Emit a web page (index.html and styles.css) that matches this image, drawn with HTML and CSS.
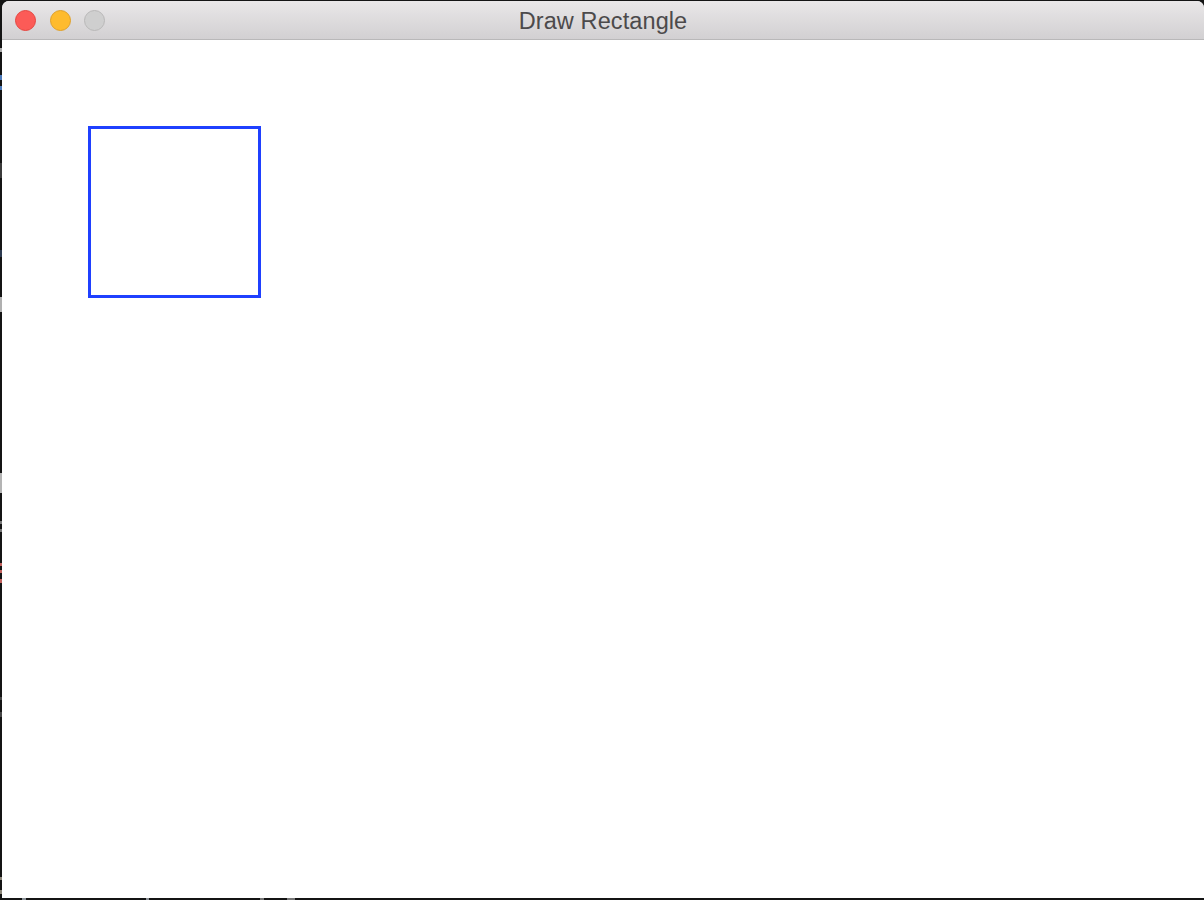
FILE: index.html
```html
<!DOCTYPE html>
<html lang="en">
<head>
    <meta charset="UTF-8">
    <meta name="viewport" content="width=device-width, initial-scale=1.0">
    <title>Draw Rectangle</title>
    <link rel="stylesheet" href="styles.css">
</head>
<body>
    <div class="window">
        <div class="titlebar">
            <div class="lights">
                <span class="light close"></span>
                <span class="light minimize"></span>
                <span class="light zoom"></span>
            </div>
            <div class="title">Draw Rectangle</div>
        </div>
        <div class="canvas">
            <div class="rectangle"></div>
        </div>
    </div>

    <!-- bits of the desktop showing round the window edge -->
    <svg class="edge-specks" width="1204" height="900" viewBox="0 0 1204 900">
        <rect x="0" y="48" width="2" height="4" fill="#a9a9a9"/>
        <rect x="0" y="75" width="2" height="5" fill="#4a78b8"/>
        <rect x="0" y="86" width="2" height="4" fill="#4a78b8"/>
        <rect x="0" y="163" width="2" height="15" fill="#3a3a3a"/>
        <rect x="0" y="250" width="2" height="7" fill="#2c3a50"/>
        <rect x="0" y="297" width="2" height="15" fill="#b0b0b0"/>
        <rect x="0" y="473" width="2" height="20" fill="#b4b4b4"/>
        <rect x="0" y="521" width="2" height="3" fill="#777"/>
        <rect x="0" y="529" width="2" height="3" fill="#777"/>
        <rect x="0" y="563" width="2" height="3" fill="#c0605c"/>
        <rect x="0" y="570" width="2" height="3" fill="#c0605c"/>
        <rect x="0" y="579" width="2" height="4" fill="#c0605c"/>
        <rect x="0" y="697" width="2" height="3" fill="#444"/>
        <rect x="0" y="712" width="2" height="5" fill="#444"/>
        <rect x="0" y="877" width="2" height="3" fill="#8a8578"/>
        <rect x="0" y="890" width="2" height="4" fill="#8a8578"/>
        <rect x="22" y="898" width="4" height="2" fill="#8a9096"/>
        <rect x="146" y="898" width="3" height="2" fill="#8a9096"/>
        <rect x="260" y="898" width="4" height="2" fill="#777"/>
        <rect x="287" y="898" width="8" height="2" fill="#777"/>
    </svg>
</body>
</html>
```

FILE: styles.css
```css
html, body {
    margin: 0;
    height: 100%;
    background: #141414;
}

.window {
    height: 897px;
    margin: 1px 0 2px 2px;
    display: flex;
    flex-direction: column;
    overflow: hidden;
    border-radius: 7px 7px 0 0;
    background: #fff;
}

.titlebar {
    position: relative;
    height: 39px;
    flex-shrink: 0;
    display: flex;
    align-items: center;
    justify-content: center;
    box-sizing: border-box;
    padding-top: 2px;
    background: linear-gradient(#e9e7e8 0%, #d2d0d2 100%);
    border-bottom: 1px solid #b9b8b9;
}

.lights {
    position: absolute;
    left: 13px;
    top: 9px;
    display: flex;
    gap: 13.5px;
}

.light {
    width: 21px;
    height: 21px;
    box-sizing: border-box;
    border-radius: 50%;
    border: 1px solid;
}

.light.close {
    background: #fc5b57;
    border-color: #e5453f;
}

.light.minimize {
    background: #febb2e;
    border-color: #e0a028;
}

.light.zoom {
    background: #cfcfcf;
    border-color: #b9b8b8;
}

.title {
    font-family: "Liberation Sans", Arial, sans-serif;
    font-size: 23.5px;
    letter-spacing: 0.1px;
    color: #4c4a4b;
}

.canvas {
    position: relative;
    flex: 1;
    background: #fff;
}

.rectangle {
    position: absolute;
    left: 86px;
    top: 86px;
    width: 173px;
    height: 172px;
    box-sizing: border-box;
    border: 3px solid #1f40ff;
}

.edge-specks {
    position: absolute;
    left: 0;
    top: 0;
    pointer-events: none;
}
```
